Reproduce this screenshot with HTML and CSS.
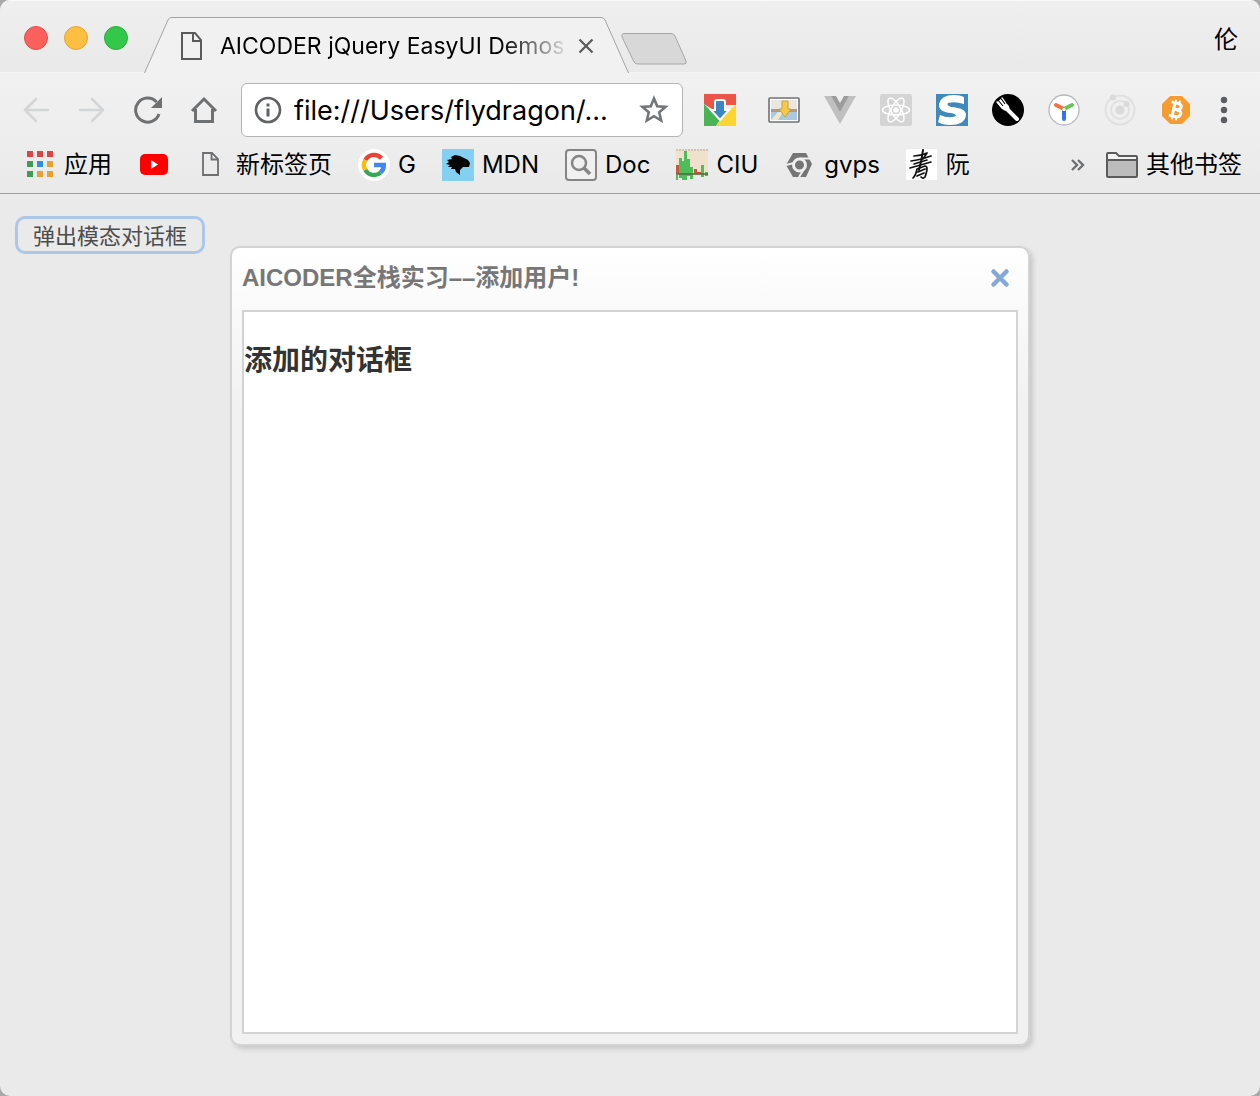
FILE: index.html
```html
<!DOCTYPE html>
<html lang="zh-CN">
<head>
<meta charset="utf-8">
<meta name="viewport" content="width=device-width, initial-scale=1">
<title>AICODER jQuery EasyUI Demos</title>
<link rel="stylesheet" href="styles.css">
</head>
<body>
<div class="browser">
  <header class="tabstrip">
    <div class="lights">
      <button class="light light-close" aria-label="关闭"></button>
      <button class="light light-min" aria-label="最小化"></button>
      <button class="light light-max" aria-label="最大化"></button>
    </div>
    <div class="tab">
      <svg class="tab-edge" width="28" height="56" viewBox="0 0 28 56"><path d="M0 56 L24 3 Q25 0.500 28 0.500 V56Z" fill="#f1f1f1"/><path d="M0.500 56 L24 3 Q25 0.500 28 0.500" fill="none" stroke="#a3a3a3"/></svg>
      <div class="tab-body">
        <svg class="tab-icon" width="22" height="28" viewBox="0 0 22 28" fill="none" stroke="#5a5a5a" stroke-width="2"><path d="M1 1H14L20 8V27H1Z"/><path d="M12 1V9H20"/></svg>
        <span class="tab-title">AICODER jQuery EasyUI Demos</span>
        <button class="tab-close" aria-label="关闭标签页"><svg width="16" height="16" viewBox="0 0 16 16"><path d="M1.500 1.500L14.500 14.500M14.500 1.500L1.500 14.500" stroke="#5a5a5a" stroke-width="2.200"/></svg></button>
      </div>
      <svg class="tab-edge" width="28" height="56" viewBox="0 0 28 56"><path d="M28 56 L4 3 Q3 0.500 0 0.500 V56Z" fill="#f1f1f1"/><path d="M27.500 56 L4 3 Q3 0.500 0 0.500" fill="none" stroke="#a3a3a3"/></svg>
    </div>
    <button class="new-tab" aria-label="新标签页"><svg width="66" height="32" viewBox="0 0 66 32"><path d="M3 .500H50Q53 .500 54 3L65 28Q66 31 63 31H17Q14 31 13 29L1 4Q0 .500 3 .500Z" fill="#d8d8d8" stroke="#a6a6a6"/></svg></button>
    <button class="profile">伦</button>
  </header>

  <nav class="toolbar">
    <div class="nav-buttons">
      <button class="icon" aria-label="后退"><svg width="28" height="28" viewBox="0 0 28 28" fill="none" stroke="#d3d5d7" stroke-width="2.600" stroke-linecap="round" stroke-linejoin="round"><path d="M26 14H3M14 3L3 14L14 25"/></svg></button>
      <button class="icon" aria-label="前进"><svg width="28" height="28" viewBox="0 0 28 28" fill="none" stroke="#d3d5d7" stroke-width="2.600" stroke-linecap="round" stroke-linejoin="round"><path d="M2 14H25M14 3L25 14L14 25"/></svg></button>
      <button class="icon" aria-label="重新加载"><svg width="28" height="28" viewBox="0 0 28 28"><path d="M25 18A12 12 0 1 1 22.500 6" fill="none" stroke="#6e7072" stroke-width="3"/><path d="M28 1V12H17Z" fill="#6e7072"/></svg></button>
      <button class="icon" aria-label="主页"><svg width="28" height="28" viewBox="0 0 28 28" fill="none" stroke="#6e7072" stroke-width="3"><path d="M2 15L14 3L26 15M5.500 13V25.500H22.500V13" stroke-linejoin="miter"/></svg></button>
    </div>
    <div class="address">
      <svg width="28" height="28" viewBox="0 0 28 28"><circle cx="14" cy="14" r="12" fill="none" stroke="#5f6163" stroke-width="2.600"/><path d="M12.500 7.500h3v3h-3zM12.500 12.500h3v8h-3z" fill="#5f6163"/></svg>
      <input class="url" type="text" aria-label="地址" value="file:///Users/flydragon/...">
      <button class="icon star" aria-label="收藏"><svg width="30" height="30" viewBox="0 0 30 30"><path d="M15 3.500L18.200 11.200L26.600 11.900L20.200 17.300L22.200 25.500L15 21.200L7.800 25.500L9.800 17.300L3.400 11.900L11.800 11.200Z" fill="none" stroke="#737678" stroke-width="2.600"/></svg></button>
    </div>
    <div class="extensions">
      <button class="icon ext-first" aria-label="下载"><svg width="32" height="32" viewBox="0 0 32 32"><path d="M0 0H32V11H22L16 20L0 10Z" fill="#ea5449"/><path d="M0 10L16 26L12 32H0Z" fill="#49b455"/><path d="M32 11V32H12L20 20Z" fill="#fbd532"/><path d="M13 6H19Q21 6 21 8V16H25L16 26L7 16H11V8Q11 6 13 6Z" fill="#3b87c3" stroke="#fff" stroke-width="2"/></svg></button>
      <button class="icon" aria-label="保存图片"><svg width="32" height="32" viewBox="0 0 32 32"><rect x="1" y="4" width="30" height="24" rx="1" fill="#fff" stroke="#6f7174" stroke-width="1.600"/><path d="M3 6H29V17H3Z" fill="#e9e8e0"/><path d="M3 15H29V19H3Z" fill="#b29a83"/><path d="M3 18H29V26H3Z" fill="#a9c9e2"/><path d="M3 26L10 18H15L10 26Z" fill="#f0e6ce"/><path d="M14 7H20V15H23L17 23L11 15H14Z" fill="#f6c94b" stroke="#c9a040"/></svg></button>
      <button class="icon" aria-label="Vue"><svg width="32" height="32" viewBox="0 0 32 32"><path d="M0 2H7L16 17L25 2H32L16 30Z" fill="#c0c0c0"/><path d="M7 2H12L16 9L20 2H25L16 18Z" fill="#9c9c9c"/></svg></button>
      <button class="icon" aria-label="React"><svg width="32" height="32" viewBox="0 0 32 32"><rect width="32" height="32" rx="2" fill="#d4d4d4"/><g fill="none" stroke="#fff" stroke-width="1.500"><ellipse cx="16" cy="16" rx="13.500" ry="5"/><ellipse cx="16" cy="16" rx="13.500" ry="5" transform="rotate(60 16 16)"/><ellipse cx="16" cy="16" rx="13.500" ry="5" transform="rotate(120 16 16)"/></g><circle cx="16" cy="16" r="2.700" fill="#fff"/></svg></button>
      <button class="icon" aria-label="搜狗"><svg width="32" height="32" viewBox="0 0 32 32"><rect width="32" height="32" fill="#4089bd"/><path d="M28 3V10Q19 7 12 9Q10 11 15 13Q30 14 30 21Q29 31 14 31Q6 31 2 28L4 21Q13 25 20 22Q20 20 15 19Q2 18 3 10Q5 1 18 1Q24 1 28 3Z" fill="#fff"/></svg></button>
      <button class="icon" aria-label="Fork"><svg width="32" height="32" viewBox="0 0 32 32"><circle cx="16" cy="16" r="16" fill="#000"/><path d="M15 15L25 25" stroke="#fff" stroke-width="4" stroke-linecap="round"/><path d="M5 8L10 14Q13 17 16 16Q18 13 14 10L10 4" fill="#fff" stroke="#fff" stroke-width="1.500" stroke-linecap="round"/><path d="M6 6L11 12M9 4.500L13 10" stroke="#000" stroke-width="1.100"/></svg></button>
      <button class="icon" aria-label="代理"><svg width="32" height="32" viewBox="0 0 32 32"><circle cx="16" cy="16" r="15" fill="#fff" stroke="#b5b8bd" stroke-width="1.300"/><g stroke-width="4" stroke-linecap="round"><path d="M16 16V25" stroke="#3174ed"/><path d="M16 15L8 11" stroke="#ff6d39"/><path d="M16 15L24 11" stroke="#65c653"/></g><circle cx="16" cy="15.500" r="1.600" fill="#fff"/></svg></button>
      <button class="icon" aria-label="轨道"><svg width="32" height="32" viewBox="0 0 32 32"><g fill="none" stroke="#e0e0e0" stroke-width="2"><circle cx="16" cy="16" r="14.500"/><circle cx="16" cy="16" r="9"/></g><g fill="#dadada"><circle cx="16" cy="16" r="4.500"/><circle cx="9" cy="3.500" r="3"/><circle cx="22.500" cy="10" r="3"/></g></svg></button>
      <button class="icon" aria-label="比特币"><svg width="32" height="32" viewBox="0 0 32 32"><path d="M10 1.500H22L30.500 10V22L22 30.500H10L1.500 22V10Z" fill="#f59b31" stroke="#fff5e5"/><g fill="none" stroke="#fff" stroke-width="3" transform="rotate(12 16 16)"><path d="M10 9H17Q21 10 20.500 12.500Q20 15.500 16 15.500H13M16 15.500Q22 16 21.500 19Q21 22.500 17 22.500H10M13.500 9V22.500"/><path d="M14 6V9M18 6V9M14 22V26M18 22V26" stroke-width="2"/></g></svg></button>
      <button class="icon menu" aria-label="菜单"><svg width="8" height="28" viewBox="0 0 8 28" fill="#5b5d60"><circle cx="4" cy="4" r="3.200"/><circle cx="4" cy="14" r="3.200"/><circle cx="4" cy="24" r="3.200"/></svg></button>
    </div>
  </nav>

  <nav class="bookmarks">
    <a class="bookmark" href="#apps"><svg width="32" height="32" viewBox="0 0 32 32"><path d="M3 2h6v6h-6zM13 2h6v6h-6zM23 2h6v6h-6z" fill="#e04343"/><path d="M3 12h6v6h-6zM3 22h6v6h-6z" fill="#3f9b56"/><path d="M13 12h6v6h-6z" fill="#318ce7"/><path d="M23 12h6v6h-6zM13 22h6v6h-6zM23 22h6v6h-6z" fill="#e8a031"/></svg>应用</a>
    <a class="bookmark" href="#youtube" aria-label="YouTube"><svg width="32" height="32" viewBox="0 0 32 32"><rect x="2" y="5" width="28" height="21" rx="5" fill="#f00"/><path d="M13 11L20 15.500L13 20Z" fill="#fff"/></svg></a>
    <a class="bookmark" href="#newtab"><svg width="32" height="32" viewBox="0 0 32 32" fill="none" stroke="#6c6e70" stroke-width="1.800"><path d="M7 4H16L22 10V26H7Z"/><path d="M15.500 4V10.500H22"/></svg>新标签页</a>
    <a class="bookmark" href="#google"><svg width="32" height="32" viewBox="0 0 32 32"><circle cx="16" cy="16" r="16" fill="#fff"/><g fill="none" stroke-width="4.400"><path d="M23.500 9.200A10 10 0 0 0 7.300 11" stroke="#ea4335"/><path d="M7.300 11A10 10 0 0 0 7.300 21" stroke="#fbbc05"/><path d="M7.300 21A10 10 0 0 0 22.500 23.600" stroke="#34a853"/><path d="M22.500 23.600Q26 20.500 25.800 16H16" stroke="#4285f4"/></g></svg>G</a>
    <a class="bookmark" href="#mdn"><svg width="32" height="32" viewBox="0 0 32 32"><rect width="32" height="32" fill="#83d0f2"/><path d="M28 14L26 11L22 9L18 7L13 6L9 8L10 10L5 11L7 13L4 15L8 16L6 18L10 18L9 20L13 20L14 23L18 26L18 21L21 18L27 18Z" fill="#050505"/></svg>MDN</a>
    <a class="bookmark" href="#doc"><svg width="32" height="32" viewBox="0 0 32 32" fill="none" stroke="#858585"><rect x="1" y="1" width="30" height="30" rx="3" stroke-width="2" fill="#f0f0f0"/><circle cx="14" cy="14" r="7" stroke-width="2.500"/><path d="M19 19L25 25" stroke-width="3.500"/></svg>Doc</a>
    <a class="bookmark" href="#ciu"><svg width="32" height="32" viewBox="0 0 32 32"><rect width="32" height="27" fill="#f0e1cc"/><path d="M0 1H32" stroke="#b5a998" stroke-dasharray="2 1"/><path d="M0 16h3v9h-3zM18 20h3v5h-3zM21 23h6v2h-6z" fill="#c95543"/><path d="M3 9h3v20h-3zM6 12h2v19h-2zM8 2h3v29h-3zM11 10h3v17h-3zM14 18h3v12h-3zM25 16h3v12h-3zM0 26h2v5h-2zM29 23h3v4h-3z" fill="#4cbd58"/><path d="M0 25H32" stroke="#50683f" stroke-width="1.500"/></svg>CIU</a>
    <a class="bookmark" href="#gvps"><svg width="32" height="32" viewBox="0 0 32 32"><path d="M9 4H22L28 15L22 28H9L2 16Z" fill="#757575"/><circle cx="15.500" cy="16" r="6" fill="none" stroke="#eee" stroke-width="3"/><path d="M16 9.500H26M10 14L2 16M20 20L15 28" stroke="#eee" stroke-width="2"/><circle cx="15.500" cy="16" r="3.500" fill="#757575"/></svg>gvps</a>
    <a class="bookmark" href="#ruan"><svg width="32" height="32" viewBox="0 0 32 32"><rect width="31" height="31" fill="#fff"/><g fill="none" stroke="#111" stroke-linecap="round" stroke-linejoin="round"><path d="M8 7Q15 7 21 4L17 10M5 12Q14 11 25 7M8 15L21 11M4 19L25 13" stroke-width="1.700"/><path d="M17 1Q16 10 13 21" stroke-width="2"/><path d="M11 20L19 17Q23 17 19 28Q17 30 15 28M11 20Q10 26 7 29M12 23L19 20M11 27L18 24" stroke-width="1.700"/></g></svg>阮</a>
    <button class="icon more" aria-label="更多书签"><svg width="14" height="14" viewBox="0 0 14 14" fill="none" stroke="#6e7072" stroke-width="2.400"><path d="M1 2L6 7L1 12M7 2L12 7L7 12"/></svg></button>
    <a class="bookmark" href="#others"><svg width="32" height="32" viewBox="0 0 32 32"><path d="M1 27V5Q1 4 2 4H10L13 7H30Q31 7 31 8V27Q31 28 30 28H2Q1 28 1 27Z" fill="#f2f2f2"/><path d="M1 11H31V28H1Z" fill="#bcbcbc"/><path d="M1 27V5Q1 4 2 4H10L13 7H30Q31 7 31 8V27Q31 28 30 28H2Q1 28 1 27ZM1 11H31" fill="none" stroke="#5b5b5b" stroke-width="2"/></svg>其他书签</a>
  </nav>

  <main class="page">
    <button class="open-dialog">弹出模态对话框</button>
    <div class="overlay">
      <section class="dialog" role="dialog" aria-labelledby="dialog-title">
        <div class="dialog-header">
          <span class="dialog-title" id="dialog-title">AICODER全栈实习––添加用户!</span>
          <button class="icon dialog-close" aria-label="关闭对话框"><svg width="20" height="20" viewBox="0 0 20 20"><path d="M3.500 3.500L16.500 16.500M16.500 3.500L3.500 16.500" stroke="#82a9d8" stroke-width="4.500" stroke-linecap="round"/></svg></button>
        </div>
        <div class="dialog-body">
          <h3 class="dialog-heading">添加的对话框</h3>
        </div>
      </section>
    </div>
  </main>
</div>
</body>
</html>
```
FILE: styles.css
```css
* {
  box-sizing: border-box;
}

body {
  margin: 0;
  background: #a8a8a8;
  font-family: Inter, "Noto Sans CJK SC", sans-serif;
  color: #000;
}

button {
  margin: 0;
  padding: 0;
  border: 0;
  background: none;
  font: inherit;
  color: inherit;
}

svg {
  display: block;
  flex: none;
}

.browser {
  display: flex;
  flex-direction: column;
  min-height: 100vh;
  overflow: hidden;
  border-radius: 10px;
  background: #eaeaea;
}

/* Tab strip */
.tabstrip {
  display: flex;
  align-items: flex-end;
  height: 73px;
  padding: 0 22px 0 24px;
  border-top: 1px solid #f8f8f8;
  background: linear-gradient(#efefef, #e9e9e9);
  box-shadow: inset 0 -1px #f5f5f5;
}

.lights {
  display: flex;
  gap: 16px;
  margin-right: 16px;
  padding-bottom: 23px;
}

.light {
  width: 24px;
  height: 24px;
  border: 1px solid;
  border-radius: 50%;
}

.light-close {
  border-color: #e2504d;
  background: #fc605c;
}

.light-min {
  border-color: #e0a538;
  background: #fdbe41;
}

.light-max {
  border-color: #29ae3d;
  background: #34c84a;
}

.tab {
  display: flex;
  flex: 0 1 485px;
  min-width: 0;
}

.tab-body {
  display: flex;
  flex: 1;
  align-items: center;
  min-width: 0;
  height: 56px;
  padding: 0 7px 0 9px;
  border-top: 1px solid #a3a3a3;
  background: #f1f1f1;
}

.tab-title {
  flex: 1;
  min-width: 0;
  margin: 0 6px 0 17px;
  overflow: hidden;
  font-size: 23px;
  line-height: 32px;
  white-space: nowrap;
  mask-image: linear-gradient(to right, #000 calc(100% - 72px), transparent);
}

.new-tab {
  margin-left: -8px;
  padding-bottom: 8px;
}

.profile {
  margin-left: auto;
  padding-bottom: 17px;
  font-size: 24px;
  line-height: 32px;
}

/* Toolbar */
.toolbar {
  display: flex;
  align-items: center;
  height: 74px;
  padding: 0 32px 0 22px;
  background: linear-gradient(#f1f1f1, #ededed);
}

.nav-buttons {
  display: flex;
  gap: 28px;
}

.icon {
  display: flex;
  align-items: center;
  justify-content: center;
}

.address {
  display: flex;
  flex: 1;
  align-items: center;
  min-width: 0;
  height: 54px;
  margin: 0 21px 0 23px;
  padding: 0 13px 0 12px;
  border: 1px solid #b4b4b4;
  border-radius: 6px;
  background: #fff;
}

.url {
  flex: 1;
  min-width: 0;
  margin-left: 12px;
  padding: 2px 0 0;
  border: 0;
  outline: 0;
  background: none;
  font: 27px/36px Inter, sans-serif;
  color: #000;
}

.extensions {
  display: flex;
  align-items: center;
  gap: 24px;
}

.ext-first {
  margin-right: 8px;
}

.menu {
  margin-left: 4px;
}

/* Bookmarks */
.bookmarks {
  display: flex;
  align-items: center;
  gap: 26px;
  height: 47px;
  padding: 0 18px 10px 24px;
  border-bottom: 1px solid #a0a0a0;
  background: linear-gradient(#ededed, #e9e9e9);
}

.bookmark {
  display: flex;
  flex: none;
  align-items: center;
  gap: 8px;
  font-size: 24px;
  line-height: 34px;
  color: #000;
  text-decoration: none;
}

.more {
  margin-left: auto;
  margin-right: -5px;
}

/* Page */
.page {
  position: relative;
  flex: 1;
  padding: 22px 15px;
}

.open-dialog {
  height: 38px;
  padding: 2px 15px 0;
  border: 3px solid #adc7e6;
  border-radius: 10px;
  font-size: 22px;
  line-height: 30px;
  color: #4d4d4d;
}

/* The modal layer lies over the page */
.overlay {
  position: absolute;
  inset: 0;
  display: flex;
  justify-content: center;
  padding: 52px 16px 50px;
  pointer-events: none;
}

.dialog {
  display: flex;
  flex: 0 1 800px;
  flex-direction: column;
  min-width: 0;
  padding: 10px;
  border: 2px solid #d3d3d3;
  border-radius: 10px;
  background: linear-gradient(#fff, #f1f1f1 20%);
  box-shadow: 3px 3px 5px #c8c8c8;
  pointer-events: auto;
}

.dialog-header {
  display: flex;
  align-items: center;
  justify-content: space-between;
  height: 52px;
  padding: 0 8px 12px 0;
}

.dialog-title {
  font: bold 24px/32px "Liberation Sans", "Noto Sans CJK SC", sans-serif;
  color: #777;
}

.dialog-body {
  flex: 1;
  border: 2px solid #d3d3d3;
  background: #fff;
}

.dialog-heading {
  margin: 28px 0;
  font-size: 28px;
  line-height: 40px;
  color: #333;
}
```
